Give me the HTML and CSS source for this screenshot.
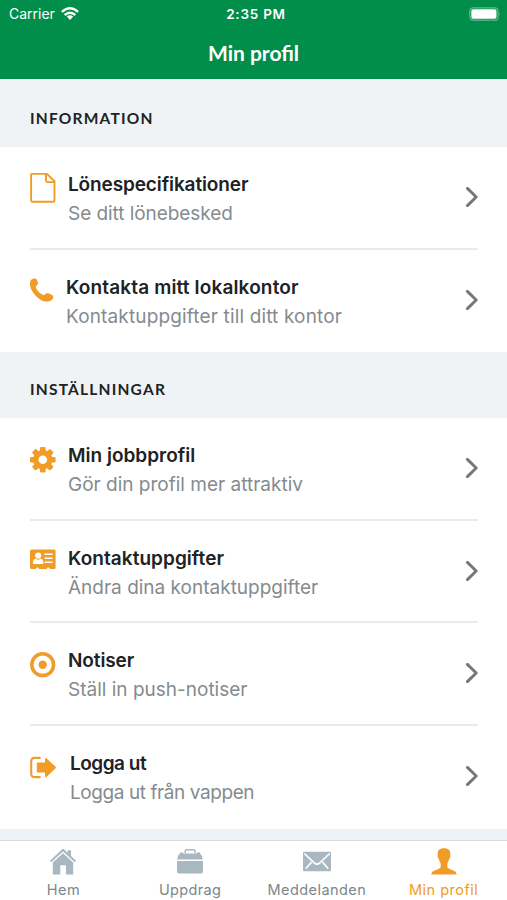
FILE: index.html
```html
<!DOCTYPE html>
<html lang="sv">
<head>
<meta charset="utf-8">
<title>Min profil</title>
<link rel="stylesheet" href="styles.css">
</head>
<body>
<div class="app">
  <header class="header">
    <div class="status">
      <div class="carrier"><span>Carrier</span>
        <svg class="wifi" width="18" height="13" viewBox="0 0 18 13" fill="none" stroke="#fff" stroke-width="2.4"><path d="M.9 4.8Q9-2.2 17.1 4.8M3.7 8Q9 3.6 14.3 8"/><path d="M5.8 9.6Q9 7 12.2 9.6L9 12.9Z" fill="#fff" stroke="none"/></svg>
      </div>
      <span class="time">2:35 PM</span>
      <svg class="battery" width="32" height="14" viewBox="0 0 32 14"><rect x=".8" y=".8" width="28.2" height="12.4" rx="3.3" fill="none" stroke="#64b98c" stroke-width="1.2"/><rect x="2.3" y="2.3" width="25.2" height="9.4" rx="1.8" fill="#fff"/><path d="M30.3 5q1.5 2 0 4z" fill="#64b98c"/></svg>
    </div>
    <h1 class="title">Min profil</h1>
  </header>
  <main class="content">
    <h2 class="section">INFORMATION</h2>
    <ul class="list">
      <li class="row">
        <svg class="icon" viewBox="0 0 26 32" width="26" height="32" fill="none" stroke="#f19c26" stroke-width="1.9" stroke-linejoin="round"><path d="M2 1.9H17L24.5 9.3V28.2Q24.5 29.8 23 29.8H2.5Q1.1 29.8 1.1 28.2V2.8Q1.1 1.9 2 1.9ZM16 2V8.6Q16 10.1 17.5 10.1H24.4"/></svg>
        <div class="text"><h3 class="name n-pay">Lönespecifikationer</h3><p class="sub s-pay">Se ditt lönebesked</p></div>
        <svg class="chevron" viewBox="0 0 12 20" width="12" height="20"><path d="M1.4 1.4 10.2 10 1.4 18.6"/></svg>
      </li>
      <li class="row">
        <svg class="icon" viewBox="0 0 24 32" width="24" height="32" fill="#f19c26"><path d="M.9 5C2.8 3.1 5.8 2.8 7 4.9L8 7.7C8.5 9.4 6.9 10.6 5.6 11.5 6.7 15.5 10 18.8 14 20.2 15.3 18.4 16.8 17.8 18.4 18.3L22 20.1C24.6 21.8 22.6 25.1 20 26.1 16 27.5 11.5 25.9 8 22.9 3.6 19.5.9 15.2.1 10.6-.2 8.5 0 6.1.9 5Z"/></svg>
        <div class="text"><h3 class="name n-office">Kontakta mitt lokalkontor</h3><p class="sub s-office">Kontaktuppgifter till ditt kontor</p></div>
        <svg class="chevron" viewBox="0 0 12 20" width="12" height="20"><path d="M1.4 1.4 10.2 10 1.4 18.6"/></svg>
      </li>
    </ul>
    <h2 class="section section-settings">INSTÄLLNINGAR</h2>
    <ul class="list">
      <li class="row">
        <svg class="icon" viewBox="0 0 26 32" width="26" height="32"><g transform="translate(12.8 16.7)" fill="#f19c26"><g id="teeth"><rect x="-2.8" y="-12.8" width="5.6" height="25.6" rx="1.2"/><rect x="-12.8" y="-2.8" width="25.6" height="5.6" rx="1.2"/></g><use href="#teeth" transform="rotate(45)"/><circle r="9.7"/><circle r="4.3" fill="#fff"/></g></svg>
        <div class="text"><h3 class="name">Min jobbprofil</h3><p class="sub">Gör din profil mer attraktiv</p></div>
        <svg class="chevron" viewBox="0 0 12 20" width="12" height="20"><path d="M1.4 1.4 10.2 10 1.4 18.6"/></svg>
      </li>
      <li class="row">
        <svg class="icon" viewBox="0 0 26 32" width="26" height="32"><g transform="translate(0 -.6)"><rect x="0" y="4.2" width="25.6" height="19.4" rx="1.5" fill="#f19c26"/><g fill="#fff"><circle cx="8.2" cy="10.2" r="3.1"/><path d="M3.1 18.6V16.5Q3.1 13.6 6 13.3L8.2 14.5 10.4 13.3Q13.2 13.6 13.2 16.5V18.6Z"/><path d="M14.5 8.2H22.6V9.7H14.5ZM14.5 12.1H22.6V13.6H14.5ZM14.5 16.1H22.6V17.6H14.5Z"/><path d="M6 24V22.9Q7.5 21.1 9 22.9V24ZM16.8 24V22.9Q18.3 21.1 19.8 22.9V24Z"/></g></g></svg>
        <div class="text"><h3 class="name n-contact">Kontaktuppgifter</h3><p class="sub">Ändra dina kontaktuppgifter</p></div>
        <svg class="chevron" viewBox="0 0 12 20" width="12" height="20"><path d="M1.4 1.4 10.2 10 1.4 18.6"/></svg>
      </li>
      <li class="row">
        <svg class="icon" viewBox="0 0 26 32" width="26" height="32"><circle cx="12.7" cy="16.7" r="10.9" fill="none" stroke="#f19c26" stroke-width="3.5"/><circle cx="12.7" cy="16.7" r="4.2" fill="#f19c26"/></svg>
        <div class="text"><h3 class="name n-notice">Notiser</h3><p class="sub">Ställ in push-notiser</p></div>
        <svg class="chevron" viewBox="0 0 12 20" width="12" height="20"><path d="M1.4 1.4 10.2 10 1.4 18.6"/></svg>
      </li>
      <li class="row">
        <svg class="icon" viewBox="0 0 28 32" width="28" height="32"><g transform="translate(0 -.4)"><path d="M9.8 7.3H4.9Q1.2 7.3 1.2 11V22.8Q1.2 26.5 4.9 26.5H9.8" fill="none" stroke="#f19c26" stroke-width="2.1" stroke-linecap="round"/><path d="M7.4 11.9H15V8.1Q15.3 6.9 16.4 7.6L25.4 16Q26.3 16.9 25.4 17.8L16.4 26.3Q15.3 27 15 25.8V21.8H7.4Q6.8 21.8 6.8 21.2V12.5Q6.8 11.9 7.4 11.9Z" fill="#f19c26"/></g></svg>
        <div class="text"><h3 class="name n-logout">Logga ut</h3><p class="sub s-logout">Logga ut från vappen</p></div>
        <svg class="chevron" viewBox="0 0 12 20" width="12" height="20"><path d="M1.4 1.4 10.2 10 1.4 18.6"/></svg>
      </li>
    </ul>
  </main>
  <nav class="tabs">
    <a class="tab"><svg width="28" height="28" viewBox="0 0 28 28" fill="#a9b8c0"><path d="M14 .5 18.6 4.8V2.3H22V8L27.1 12.8 25.8 14.3 14 3.4 2.2 14.3.9 12.8Z"/><path d="M14 5.2 24.2 14.6V26.4H17V17.2H11.3V26.4H3.8V14.6Z"/></svg><span class="t-home">Hem</span></a>
    <a class="tab"><svg width="28" height="28" viewBox="0 0 28 28" fill="#a9b8c0"><path d="M9.2 5V3.5Q9.2 1.8 10.9 1.8H17.3Q19 1.8 19 3.5V5" fill="none" stroke="#a9b8c0" stroke-width="1.5"/><path d="M1.2 11.4Q1.5 7.1 4 5.4V4.4H7.2V5.4H20.8V4.4H24V5.4Q26.5 7.1 26.8 11.4ZM1 13H27V23.2Q27 25.4 24.8 25.4H3.2Q1 25.4 1 23.2Z"/></svg><span class="t-jobs">Uppdrag</span></a>
    <a class="tab"><svg width="28" height="28" viewBox="0 0 28 28"><rect y="3.7" width="28" height="19.6" rx="1.3" fill="#a9b8c0"/><path d="M1.3 5.5 11.2 14.8Q14 17.4 16.8 14.8L26.7 5.5M2.7 20.7 8.5 14.1M25.3 20.7 19.5 14.1" fill="none" stroke="#fff" stroke-width="1.6"/></svg><span class="t-messages">Meddelanden</span></a>
    <a class="tab active"><svg width="28" height="28" viewBox="0 0 28 28" fill="#f19c26"><path d="M14 .3C18.7.3 20.7 2.5 20.2 6.4 21 7.8 20 10.3 19.2 11 18.6 13.7 17.5 14.7 17.3 16V19.2C18.4 21.8 26.2 21.5 26.7 26.4H1.3C1.8 21.5 9.6 21.8 10.7 19.2V16C10.5 14.7 9.4 13.7 8.8 11 8 10.3 7 7.8 7.8 6.4 7.3 2.5 9.3.3 14 .3Z"/></svg><span class="t-profile">Min profil</span></a>
  </nav>
</div>
</body>
</html>
```

FILE: styles.css
```css
* { box-sizing: border-box; }
body { margin: 0; background: #fff; font-family: Inter, "Liberation Sans", sans-serif; color: #202223; }
h1, h2, h3, p, ul { margin: 0; padding: 0; }
ul { list-style: none; }
svg { display: block; flex: none; }

.app { display: flex; flex-direction: column; width: 507px; height: 900px; overflow: hidden; }
.header { height: 79px; background: #008e4a; color: #fff; }
.status { display: grid; grid-template-columns: 1fr auto 1fr; height: 27px; padding: 0 7px 0 9px; align-items: center; font-size: 14px; }
.carrier { display: flex; align-items: center; gap: 6px; }
.time { font-weight: 600; font-size: 13.5px; letter-spacing: .75px; padding-left: 3px; }
.wifi { margin-top: -1px; }
.battery { justify-self: end; margin-right: -1px; }
.title { height: 52px; line-height: 52px; text-align: center; font-family: Lato, "Liberation Sans", sans-serif; font-size: 21px; font-weight: 700; }

.content { flex: 1; background: #eff3f6; }
.section { height: 68px; padding-left: 30px; line-height: 79px; font-family: Lato, "Liberation Sans", sans-serif; font-size: 15.5px; font-weight: 700; letter-spacing: 1.2px; }
.section-settings { height: 65.6px; line-height: 75px; }
.list { padding: 0 29px 0 30px; background: #fff; }
.row { display: flex; height: 102.7px; padding-top: 25px; border-bottom: 2px solid #e8eaeb; }
.row:last-child { border-bottom-color: transparent; }
.icon { margin-right: 12px; }
.text { flex: 1; padding-top: 1px; white-space: nowrap; }
.name { font-size: 19px; line-height: 24px; font-weight: 600; }
.sub { margin-top: 5px; font-size: 19px; line-height: 24px; color: #858b8e; }
.n-pay { letter-spacing: -.12px; }
.s-pay { letter-spacing: -.06px; }
.n-office { letter-spacing: .15px; }
.s-office { letter-spacing: .15px; }
.n-contact { letter-spacing: .05px; }
.n-notice { letter-spacing: -.1px; }
.n-logout { letter-spacing: -.5px; }
.s-logout { letter-spacing: -.42px; }
.chevron { margin-top: 15px; fill: none; stroke: #74787a; stroke-width: 2.9; stroke-linecap: round; stroke-linejoin: round; }

.tabs { display: grid; grid-template-columns: repeat(4, 1fr); height: 60px; background: #fff; border-top: 1px solid #d9dddf; }
.tab { display: flex; flex-direction: column; align-items: center; padding-top: 7px; font-size: 14.5px; line-height: 20px; color: #7d868a; }
.tab span { margin-top: 4px; }
.t-home { letter-spacing: .5px; }
.t-jobs { letter-spacing: .35px; }
.t-messages { letter-spacing: .45px; }
.t-profile { letter-spacing: .5px; }
.tab.active { color: #f19c26; }
```
